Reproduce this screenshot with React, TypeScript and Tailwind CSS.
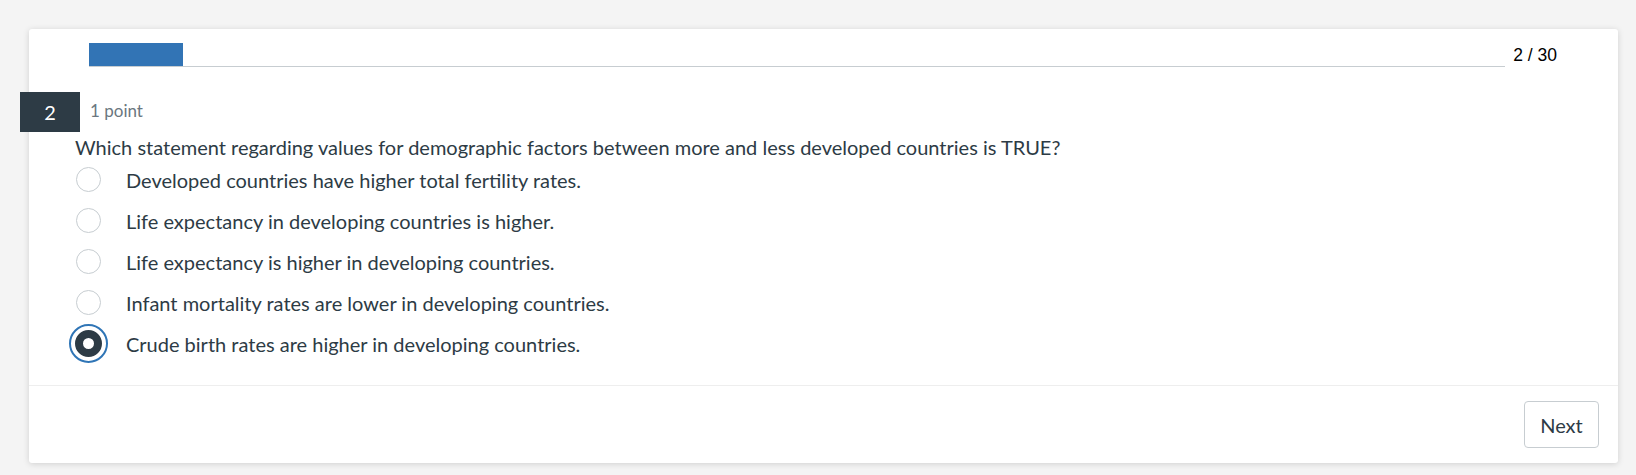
import React, {useState} from "react";

const options = [
    "Developed countries have higher total fertility rates.",
    "Life expectancy in developing countries is higher.",
    "Life expectancy is higher in developing countries.",
    "Infant mortality rates are lower in developing countries.",
    "Crude birth rates are higher in developing countries.",
]

const Radio: React.FC<{checked: boolean}> = ({checked}) => {
    if (checked) {
        return (
            <span className="flex h-[39px] w-[39px] items-center justify-center rounded-full border-2 border-[#2f75b6]">
                <span className="h-[27px] w-[27px] rounded-full border-[8px] border-[#2d3b45] bg-white"/>
            </span>
        )
    }
    return <span className="h-[25px] w-[25px] rounded-full border border-[#c7cdd1] bg-white"/>
}

export default function App() {
    const [selected, setSelected] = useState(4)

    return (
        <div className="min-h-[475px] bg-[#f4f4f4] pt-[29px] pl-[29px] pr-[18px] font-['Lato',sans-serif] text-[#2d3b45]">
            <div className="flex h-[434px] flex-col rounded-[3px] bg-white shadow-[0_1px_6px_rgba(0,0,0,0.15)]">
                <div className="h-[356px]">
                    <div className="flex h-[23px] items-center pl-[60px] pr-[61px] mt-[15px]">
                        <div className="flex h-[23px] flex-1 items-end border-b border-[#c7cdd1]">
                            <div className="h-[23px] w-[94px] bg-[#3274b5]"/>
                        </div>
                        <span className="ml-[8px] font-['Liberation_Sans',Arial,sans-serif] text-[17.5px] leading-[23px] text-black">2 / 30</span>
                    </div>

                    <div className="mt-[25px] -ml-[9px] flex items-center">
                        <div className="flex h-[40px] w-[60px] items-center justify-center bg-[#2d3b45] text-[20px] text-white">2</div>
                        <span className="ml-[10px] -mt-[3px] text-[17px] text-[#6b7780]">1 point</span>
                    </div>

                    <div className="ml-[46px] mt-[3px] text-[20px] leading-[24px]">
                        Which statement regarding values for demographic factors between more and less developed countries is TRUE?
                    </div>

                    <div className="ml-[39px]">
                        {options.map((text, i) => (
                            <div key={i} className="flex h-[41px] cursor-pointer items-center" onClick={() => setSelected(i)}>
                                <span className="flex w-[40px] justify-center">
                                    <Radio checked={selected === i}/>
                                </span>
                                <span className="ml-[18px] text-[20px]">{text}</span>
                            </div>
                        ))}
                    </div>
                </div>

                <div className="flex flex-1 items-start justify-end border-t border-[#eeeeee] pr-[19px] pt-[15px]">
                    <button type="button"
                            className="h-[47px] w-[75px] rounded-[4px] border border-[#c7cdd1] bg-white text-[20px] text-[#2d3b45]">
                        Next
                    </button>
                </div>
            </div>
        </div>
    )
}
